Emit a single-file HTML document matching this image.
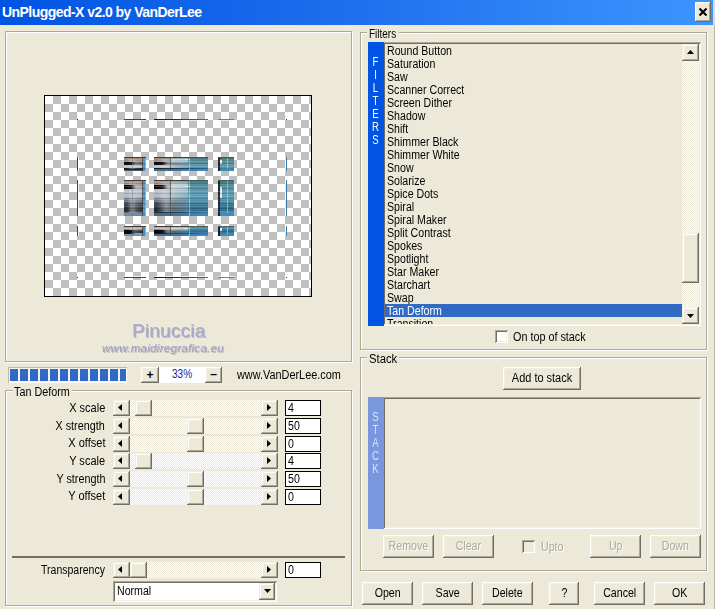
<!DOCTYPE html>
<html>
<head>
<meta charset="utf-8">
<title>UnPlugged-X v2.0 by VanDerLee</title>
<style>
html,body{margin:0;padding:0;}
body{width:715px;height:609px;overflow:hidden;background:#ECE9D8;position:relative;
  font-family:"Liberation Sans",sans-serif;font-size:12px;color:#000;line-height:13px;}
*{box-sizing:border-box;}
#win{position:absolute;left:0;top:0;width:715px;height:609px;opacity:0.999;}
.abs{position:absolute;}
#title{left:0;top:0;width:713px;height:25px;background:linear-gradient(to right,#0054E3 0%,#1C6CEC 45%,#3D95FF 100%);}
#title span{position:absolute;left:2px;top:4px;color:#fff;font-weight:bold;font-size:14px;line-height:16px;white-space:nowrap;letter-spacing:-0.55px;}
.btn{position:absolute;background:#ECE9D8;
  box-shadow:inset -1px -1px 0 #716F64,inset 1px 1px 0 #fff,inset -2px -2px 0 #ACA899,inset 2px 2px 0 #F1EFE2;
  text-align:center;white-space:nowrap;}
.btn.t{height:23px;line-height:23px;}
.btn.sb{box-shadow:inset -1px -1px 0 #716F64,inset 1px 1px 0 #F1EFE2,inset -2px -2px 0 #ACA899,inset 2px 2px 0 #fff;}
.dis{color:#ACA899;text-shadow:1px 1px 0 #fff;}
.sunken{position:absolute;box-shadow:inset 1px 1px 0 #ACA899,inset -1px -1px 0 #fff,inset 2px 2px 0 #716F64,inset -2px -2px 0 #F1EFE2;}
.gd{position:absolute;border:1px solid #ACA899;}
.gw{position:absolute;border:1px solid #fff;}
.glab{position:absolute;background:#ECE9D8;white-space:nowrap;height:13px;}
.track{position:absolute;height:16px;background:#F6F4EC;
  background-image:conic-gradient(#fff 25%,#ECE9D8 0 50%,#fff 0 75%,#ECE9D8 0);background-size:2px 2px;}
.tx{display:inline-block;white-space:nowrap;transform:scaleX(0.885);transform-origin:0 50%;}
.txc{display:inline-block;white-space:nowrap;transform:scaleX(0.885);transform-origin:50% 50%;}
.txr{display:inline-block;white-space:nowrap;transform:scaleX(0.885);transform-origin:100% 50%;}
.lab{position:absolute;white-space:nowrap;text-align:right;width:100px;left:5px;}
.tb{position:absolute;left:285px;width:36px;height:16px;border:1px solid #000;background:#fff;padding-left:2px;line-height:14px;}
.al,.ar{position:absolute;width:4px;height:7px;background:#000;}
.al{clip-path:polygon(100% 0,100% 100%,0 50%);}
.ar{clip-path:polygon(0 0,100% 50%,0 100%);}
.au,.ad{position:absolute;width:7px;height:4px;background:#000;}
.au{clip-path:polygon(0 100%,50% 0,100% 100%);}
.ad{clip-path:polygon(0 0,100% 0,50% 100%);}
.strip{position:absolute;width:16px;z-index:2;color:#fff;text-align:center;line-height:13px;}
.strip span{position:absolute;left:0;width:15px;transform:scaleX(.8);}
#list div{position:absolute;left:2px;width:297px;height:13px;line-height:15px;padding-left:2px;white-space:nowrap;}
</style>
</head>
<body>
<div id="win">
<!-- title bar -->
<div id="title" class="abs"><span>UnPlugged-X v2.0 by VanDerLee</span></div>
<div class="abs" style="left:713px;top:0;width:2px;height:25px;background:#D6DFF0"></div>
<div class="abs" style="left:714px;top:25px;width:1px;height:584px;background:#B9B6A7"></div>
<div class="btn" style="left:695px;top:2px;width:16px;height:20px;"><svg class="abs" style="left:4px;top:6px" width="8" height="8" viewBox="0 0 8 8"><path d="M0.5 0.5 L7.5 7.5 M7.5 0.5 L0.5 7.5" stroke="#000" stroke-width="2" fill="none"/></svg></div>
<!-- left preview frame -->
<div class="gw" style="left:6px;top:32px;width:347px;height:331px"></div>
<div class="gd" style="left:5px;top:31px;width:347px;height:331px"></div>
<!-- preview -->
<svg class="abs" style="left:44px;top:95px" width="268" height="202" viewBox="0 0 268 202" shape-rendering="crispEdges">
<defs>
<pattern id="ck" width="16" height="16" patternUnits="userSpaceOnUse" patternTransform="translate(1,1)"><rect width="16" height="16" fill="#fff"/><rect x="8" width="8" height="8" fill="#C0C0C0"/><rect y="8" width="8" height="8" fill="#C0C0C0"/></pattern>
<linearGradient id="gv2" x1="0" y1="0" x2="0" y2="1">
<stop offset="0" stop-color="#4a3c34"/><stop offset="0.03" stop-color="#4a3c34"/><stop offset="0.04" stop-color="#b09a84"/><stop offset="0.09" stop-color="#a89888"/>
<stop offset="0.12" stop-color="#94949a"/><stop offset="0.2" stop-color="#a8a8ae"/><stop offset="0.3" stop-color="#c0c2c8"/>
<stop offset="0.46" stop-color="#b0b6be"/><stop offset="0.56" stop-color="#70788a"/><stop offset="0.66" stop-color="#3c4652"/><stop offset="0.8" stop-color="#222a32"/><stop offset="0.89" stop-color="#0e1216"/>
<stop offset="0.91" stop-color="#7890a8"/><stop offset="1" stop-color="#6888a8"/></linearGradient>
<linearGradient id="gv1" x1="0" y1="0" x2="0" y2="1">
<stop offset="0" stop-color="#4a3c34"/><stop offset="0.08" stop-color="#4a3c34"/><stop offset="0.1" stop-color="#a08c7a"/><stop offset="0.22" stop-color="#988878"/>
<stop offset="0.3" stop-color="#8c8c90"/><stop offset="0.42" stop-color="#585860"/><stop offset="0.56" stop-color="#686870"/><stop offset="0.62" stop-color="#c8c8cc"/>
<stop offset="0.78" stop-color="#b4b8bc"/><stop offset="0.82" stop-color="#181c22"/><stop offset="0.93" stop-color="#202830"/><stop offset="1" stop-color="#6888a8"/></linearGradient>
<linearGradient id="gv3" x1="0" y1="0" x2="0" y2="1">
<stop offset="0" stop-color="#4a3a34"/><stop offset="0.12" stop-color="#4a3a34"/><stop offset="0.15" stop-color="#b8b0a8"/><stop offset="0.3" stop-color="#c4c4c8"/>
<stop offset="0.4" stop-color="#50545c"/><stop offset="0.55" stop-color="#202428"/><stop offset="0.7" stop-color="#181c22"/><stop offset="0.75" stop-color="#8098b0"/><stop offset="1" stop-color="#7090b0"/></linearGradient>
<linearGradient id="bk" x1="0" y1="0" x2="1" y2="0"><stop offset="0" stop-color="#08080c" stop-opacity="1"/><stop offset="0.6" stop-color="#08080c" stop-opacity="0.9"/><stop offset="1" stop-color="#08080c" stop-opacity="0"/></linearGradient>
<linearGradient id="hl" x1="0" y1="0" x2="1" y2="0"><stop offset="0" stop-color="#dcdce0" stop-opacity="0"/><stop offset="0.3" stop-color="#dcdce0" stop-opacity="0.5"/><stop offset="0.6" stop-color="#dcdce0" stop-opacity="0.2"/><stop offset="1" stop-color="#dcdce0" stop-opacity="0"/></linearGradient>
<linearGradient id="th" x1="0" y1="0" x2="1" y2="0"><stop offset="0.18" stop-color="#6a9cb0" stop-opacity="0"/><stop offset="0.45" stop-color="#6a9cb0" stop-opacity="0.5"/><stop offset="0.66" stop-color="#5a9cb4" stop-opacity="0.8"/><stop offset="1" stop-color="#559ab2" stop-opacity="0.9"/></linearGradient>
<linearGradient id="tv2" x1="0" y1="0" x2="0" y2="1"><stop offset="0" stop-color="#3c5a50"/><stop offset="0.06" stop-color="#4a828c"/><stop offset="0.4" stop-color="#5a9eb4"/><stop offset="0.58" stop-color="#4a8ea8"/><stop offset="0.72" stop-color="#326e8c"/><stop offset="0.86" stop-color="#2c6888"/><stop offset="0.91" stop-color="#4a94bc"/><stop offset="1" stop-color="#3a8abc"/></linearGradient>
<linearGradient id="tv1" x1="0" y1="0" x2="0" y2="1"><stop offset="0" stop-color="#3c5048"/><stop offset="0.15" stop-color="#4a7c84"/><stop offset="0.6" stop-color="#5a96a6"/><stop offset="0.82" stop-color="#4a90b0"/><stop offset="1" stop-color="#3a8abc"/></linearGradient>
<linearGradient id="tv3" x1="0" y1="0" x2="0" y2="1"><stop offset="0" stop-color="#3c5048"/><stop offset="0.2" stop-color="#5a9cb4"/><stop offset="0.5" stop-color="#2c6484"/><stop offset="0.7" stop-color="#3a80a8"/><stop offset="1" stop-color="#4a98c8"/></linearGradient>
<linearGradient id="bl" x1="0" y1="0" x2="1" y2="0"><stop offset="0" stop-color="#4a6484"/><stop offset="0.5" stop-color="#3c78a8"/><stop offset="1" stop-color="#3a8cc4"/></linearGradient>
<linearGradient id="bl0" x1="0" y1="0" x2="1" y2="0"><stop offset="0" stop-color="#101820"/><stop offset="0.45" stop-color="#1c3850"/><stop offset="1" stop-color="#2c78b0"/></linearGradient>
<linearGradient id="wv" x1="0" y1="0" x2="0" y2="1"><stop offset="0" stop-color="#e4f0f0" stop-opacity="0"/><stop offset="0.12" stop-color="#e4f0f0" stop-opacity="0.65"/><stop offset="0.4" stop-color="#d0e0e8" stop-opacity="0.35"/><stop offset="0.6" stop-color="#d0e0e8" stop-opacity="0"/></linearGradient>
<pattern id="stk" width="4" height="5" patternUnits="userSpaceOnUse"><rect width="4" height="1" fill="#fff" opacity="0.16"/><rect y="2" width="4" height="1" fill="#000" opacity="0.14"/><rect y="3" width="4" height="1" fill="#fff" opacity="0.07"/></pattern>
</defs>
<rect x="0" y="0" width="268" height="202" fill="#000"/>
<rect x="1" y="1" width="266" height="200" fill="url(#ck)"/>
<g transform="translate(1,1)">
<rect x="79" y="61" width="22" height="14" fill="url(#gv1)"/><rect x="82" y="63" width="17" height="10" fill="url(#hl)"/><rect x="79" y="66" width="12" height="3" fill="url(#bk)"/><rect x="87" y="62" width="1" height="13" fill="#606468" opacity="0.45"/><rect x="97" y="62" width="1" height="13" fill="#283038" opacity="0.7"/><rect x="98" y="62" width="2" height="13" fill="#4496c8"/><rect x="100" y="62" width="1" height="13" fill="#8cb0c4"/><rect x="79" y="63" width="22" height="10" fill="url(#stk)"/>
<rect x="109" y="61" width="54" height="14" fill="url(#gv1)"/><rect x="112" y="63" width="30" height="10" fill="url(#hl)"/><rect x="109" y="66" width="14" height="3" fill="url(#bk)"/><rect x="109" y="62" width="54" height="11" fill="url(#th)"/><rect x="143" y="61" width="20" height="14" fill="url(#tv1)" opacity="0.85"/><rect x="126" y="62" width="17" height="11" fill="url(#wv)"/><rect x="109" y="72" width="54" height="1" fill="url(#bl0)" opacity="0.85"/><rect x="109" y="73" width="54" height="2" fill="url(#bl)"/><rect x="125" y="61" width="1" height="14" fill="#403c3c" opacity="0.65"/><rect x="144" y="62" width="1" height="13" fill="#d8ecec" opacity="0.5"/><rect x="139" y="63" width="6" height="1" fill="#f0ece0" opacity="0.5"/><rect x="109" y="63" width="54" height="10" fill="url(#stk)"/>
<rect x="173" y="61" width="16" height="14" fill="url(#tv1)"/><rect x="173" y="62" width="2" height="13" fill="#202428"/><rect x="175" y="64" width="2" height="4" fill="#e8e8e8"/><rect x="182" y="62" width="1" height="13" fill="#b8d8e0" opacity="0.6"/><rect x="175" y="73" width="14" height="2" fill="#3a8cc4"/><rect x="173" y="63" width="16" height="10" fill="url(#stk)"/>
<rect x="79" y="84" width="22" height="36" fill="url(#gv2)"/><rect x="82" y="86" width="17" height="31" fill="url(#hl)"/><rect x="79" y="89" width="12" height="4" fill="url(#bk)"/><rect x="87" y="85" width="1" height="35" fill="#606468" opacity="0.45"/><rect x="97" y="85" width="1" height="35" fill="#283038" opacity="0.7"/><rect x="98" y="85" width="2" height="35" fill="#4496c8"/><rect x="100" y="85" width="1" height="35" fill="#8cb0c4"/><rect x="79" y="86" width="22" height="31" fill="url(#stk)"/>
<rect x="109" y="84" width="54" height="36" fill="url(#gv2)"/><rect x="112" y="86" width="30" height="31" fill="url(#hl)"/><rect x="109" y="89" width="14" height="4" fill="url(#bk)"/><rect x="109" y="85" width="54" height="32" fill="url(#th)"/><rect x="143" y="84" width="20" height="36" fill="url(#tv2)" opacity="0.85"/><rect x="126" y="85" width="17" height="32" fill="url(#wv)"/><rect x="109" y="116" width="54" height="1" fill="url(#bl0)" opacity="0.85"/><rect x="109" y="117" width="54" height="3" fill="url(#bl)"/><rect x="125" y="84" width="1" height="36" fill="#403c3c" opacity="0.65"/><rect x="144" y="85" width="1" height="35" fill="#d8ecec" opacity="0.5"/><rect x="139" y="90" width="6" height="1" fill="#f0ece0" opacity="0.5"/><rect x="109" y="86" width="54" height="31" fill="url(#stk)"/>
<rect x="173" y="84" width="16" height="36" fill="url(#tv2)"/><rect x="173" y="85" width="2" height="35" fill="#202428"/><rect x="175" y="91" width="2" height="11" fill="#e8e8e8"/><rect x="182" y="85" width="1" height="35" fill="#b8d8e0" opacity="0.6"/><rect x="175" y="117" width="14" height="3" fill="#3a8cc4"/><rect x="173" y="86" width="16" height="31" fill="url(#stk)"/>
<rect x="79" y="130" width="22" height="10" fill="url(#gv3)"/><rect x="82" y="132" width="17" height="6" fill="url(#hl)"/><rect x="79" y="134" width="12" height="4" fill="url(#bk)"/><rect x="87" y="131" width="1" height="9" fill="#606468" opacity="0.45"/><rect x="97" y="131" width="1" height="9" fill="#283038" opacity="0.7"/><rect x="98" y="131" width="2" height="9" fill="#4496c8"/><rect x="100" y="131" width="1" height="9" fill="#8cb0c4"/>
<rect x="109" y="130" width="54" height="10" fill="url(#gv3)"/><rect x="112" y="132" width="30" height="6" fill="url(#hl)"/><rect x="109" y="134" width="14" height="4" fill="url(#bk)"/><rect x="109" y="131" width="54" height="7" fill="url(#th)"/><rect x="143" y="130" width="20" height="10" fill="url(#tv3)" opacity="0.85"/><rect x="126" y="131" width="17" height="7" fill="url(#wv)"/><rect x="109" y="137" width="54" height="1" fill="url(#bl0)" opacity="0.85"/><rect x="109" y="138" width="54" height="2" fill="url(#bl)"/><rect x="125" y="130" width="1" height="10" fill="#403c3c" opacity="0.65"/><rect x="144" y="131" width="1" height="9" fill="#d8ecec" opacity="0.5"/><rect x="139" y="132" width="6" height="1" fill="#f0ece0" opacity="0.5"/>
<rect x="173" y="130" width="16" height="10" fill="url(#tv3)"/><rect x="173" y="131" width="2" height="9" fill="#202428"/><rect x="175" y="132" width="2" height="3" fill="#e8e8e8"/><rect x="182" y="131" width="1" height="9" fill="#b8d8e0" opacity="0.6"/><rect x="175" y="138" width="14" height="2" fill="#3a8cc4"/>
<rect x="32" y="61" width="1" height="14" fill="#404448"/><rect x="33" y="61" width="1" height="14" fill="#fff" opacity="0.8"/><rect x="241" y="61" width="1" height="14" fill="#3a7aa8"/><rect x="240" y="61" width="1" height="14" fill="#fff" opacity="0.7"/>
<rect x="32" y="84" width="1" height="36" fill="#404448"/><rect x="33" y="84" width="1" height="36" fill="#fff" opacity="0.8"/><rect x="241" y="84" width="1" height="36" fill="#3a7aa8"/><rect x="240" y="84" width="1" height="36" fill="#fff" opacity="0.7"/>
<rect x="32" y="130" width="1" height="10" fill="#404448"/><rect x="33" y="130" width="1" height="10" fill="#fff" opacity="0.8"/><rect x="241" y="130" width="1" height="10" fill="#3a7aa8"/><rect x="240" y="130" width="1" height="10" fill="#fff" opacity="0.7"/>
<rect x="79" y="23" width="22" height="1" fill="#404448"/><rect x="79" y="24" width="22" height="1" fill="#fff" opacity="0.7"/><rect x="79" y="181" width="22" height="1" fill="#404448"/><rect x="79" y="180" width="22" height="1" fill="#fff" opacity="0.7"/>
<rect x="109" y="23" width="54" height="1" fill="url(#bl0)"/><rect x="109" y="24" width="54" height="1" fill="#fff" opacity="0.7"/><rect x="109" y="181" width="54" height="1" fill="url(#bl0)"/><rect x="109" y="180" width="54" height="1" fill="#fff" opacity="0.7"/>
<rect x="173" y="23" width="16" height="1" fill="#3a8cc4"/><rect x="173" y="24" width="16" height="1" fill="#fff" opacity="0.7"/><rect x="173" y="181" width="16" height="1" fill="#3a8cc4"/><rect x="173" y="180" width="16" height="1" fill="#fff" opacity="0.7"/>
<rect x="32" y="23" width="1" height="1" fill="#303438"/><rect x="241" y="23" width="1" height="1" fill="#303438"/><rect x="32" y="181" width="1" height="1" fill="#303438"/><rect x="241" y="181" width="1" height="1" fill="#303438"/>
</g>
</svg>
<div class="abs" style="left:132px;top:320px;font-size:19px;line-height:22px;color:#A9A9D2;text-shadow:1px 1px 0 rgba(130,130,145,.55);letter-spacing:0.2px;white-space:nowrap">Pinuccia</div>
<div class="abs" style="left:102px;top:341px;font-size:11.5px;line-height:14px;font-style:italic;color:#9C9CC4;text-shadow:1px 1px 0 rgba(140,140,150,.5);letter-spacing:0.3px;white-space:nowrap">www.maidiregrafica.eu</div>
<!-- zoom row -->
<div class="abs" style="left:8px;top:367px;width:119px;height:16px;background:#F6F3E8;box-shadow:inset 1px 1px 0 #BDB9A6,inset -1px -1px 0 #fff;overflow:hidden"><div class="abs" style="left:2px;top:2px;width:116px;height:12px;background:repeating-linear-gradient(to right,#316AC5 0,#316AC5 8px,transparent 8px,transparent 10px)"></div></div>
<div class="btn" style="left:141px;top:367px;width:18px;height:16px;line-height:17px;font-weight:bold">+</div>
<div class="abs" style="left:159px;top:367px;width:46px;height:16px;background:#fff;color:#1B1B9B;text-align:center;line-height:14px"><span class="txc" style="transform:scaleX(.84)">33%</span></div>
<div class="btn" style="left:205px;top:367px;width:17px;height:16px;line-height:14px;font-weight:bold">&#8211;</div>
<div class="abs" style="left:237px;top:367px;line-height:16px"><span class="tx" style="transform:scaleX(.907)">www.VanDerLee.com</span></div>
<!-- Tan Deform group -->
<div class="gw" style="left:6px;top:391px;width:347px;height:216px"></div>
<div class="gd" style="left:5px;top:390px;width:347px;height:216px"></div>
<div class="glab" style="left:13px;top:386px;width:59px;padding-left:1px"><span class="tx" style="transform:scaleX(.9)">Tan Deform</span></div>
<div class="lab" style="top:402px"><span class="txr" style="transform:scaleX(0.92)">X scale</span></div>
<div class="track" style="left:130px;top:400px;width:131px"></div>
<div class="btn sb" style="left:113px;top:400px;width:17px;height:16px"><i class="al" style="left:5px;top:4px"></i></div>
<div class="btn sb" style="left:135px;top:400px;width:17px;height:16px"></div>
<div class="btn sb" style="left:261px;top:400px;width:17px;height:16px"><i class="ar" style="left:6px;top:4px"></i></div>
<div class="tb" style="top:400px"><span class="tx">4</span></div>
<div class="lab" style="top:420px"><span class="txr" style="transform:scaleX(0.9)">X strength</span></div>
<div class="track" style="left:130px;top:418px;width:131px"></div>
<div class="btn sb" style="left:113px;top:418px;width:17px;height:16px"><i class="al" style="left:5px;top:4px"></i></div>
<div class="btn sb" style="left:187px;top:418px;width:17px;height:16px"></div>
<div class="btn sb" style="left:261px;top:418px;width:17px;height:16px"><i class="ar" style="left:6px;top:4px"></i></div>
<div class="tb" style="top:418px"><span class="tx">50</span></div>
<div class="lab" style="top:437px"><span class="txr" style="transform:scaleX(0.92)">X offset</span></div>
<div class="track" style="left:130px;top:436px;width:131px"></div>
<div class="btn sb" style="left:113px;top:436px;width:17px;height:16px"><i class="al" style="left:5px;top:4px"></i></div>
<div class="btn sb" style="left:187px;top:436px;width:17px;height:16px"></div>
<div class="btn sb" style="left:261px;top:436px;width:17px;height:16px"><i class="ar" style="left:6px;top:4px"></i></div>
<div class="tb" style="top:436px"><span class="tx">0</span></div>
<div class="lab" style="top:455px"><span class="txr" style="transform:scaleX(0.92)">Y scale</span></div>
<div class="track" style="left:130px;top:453px;width:131px"></div>
<div class="btn sb" style="left:113px;top:453px;width:17px;height:16px"><i class="al" style="left:5px;top:4px"></i></div>
<div class="btn sb" style="left:135px;top:453px;width:17px;height:16px"></div>
<div class="btn sb" style="left:261px;top:453px;width:17px;height:16px"><i class="ar" style="left:6px;top:4px"></i></div>
<div class="tb" style="top:453px"><span class="tx">4</span></div>
<div class="lab" style="top:473px"><span class="txr" style="transform:scaleX(0.9)">Y strength</span></div>
<div class="track" style="left:130px;top:471px;width:131px"></div>
<div class="btn sb" style="left:113px;top:471px;width:17px;height:16px"><i class="al" style="left:5px;top:4px"></i></div>
<div class="btn sb" style="left:187px;top:471px;width:17px;height:16px"></div>
<div class="btn sb" style="left:261px;top:471px;width:17px;height:16px"><i class="ar" style="left:6px;top:4px"></i></div>
<div class="tb" style="top:471px"><span class="tx">50</span></div>
<div class="lab" style="top:490px"><span class="txr" style="transform:scaleX(0.92)">Y offset</span></div>
<div class="track" style="left:130px;top:489px;width:131px"></div>
<div class="btn sb" style="left:113px;top:489px;width:17px;height:16px"><i class="al" style="left:5px;top:4px"></i></div>
<div class="btn sb" style="left:187px;top:489px;width:17px;height:16px"></div>
<div class="btn sb" style="left:261px;top:489px;width:17px;height:16px"><i class="ar" style="left:6px;top:4px"></i></div>
<div class="tb" style="top:489px"><span class="tx">0</span></div>
<div class="abs" style="left:12px;top:556px;width:333px;height:2px;background:#716F64"></div>
<div class="lab" style="top:564px"><span class="txr" style="transform:scaleX(0.876)">Transparency</span></div>
<div class="track" style="left:130px;top:562px;width:131px"></div>
<div class="btn sb" style="left:113px;top:562px;width:17px;height:16px"><i class="al" style="left:5px;top:4px"></i></div>
<div class="btn sb" style="left:130px;top:562px;width:17px;height:16px"></div>
<div class="btn sb" style="left:261px;top:562px;width:17px;height:16px"><i class="ar" style="left:6px;top:4px"></i></div>
<div class="tb" style="top:562px"><span class="tx">0</span></div>
<div class="sunken" style="left:113px;top:581px;width:164px;height:21px;background:#fff"></div>
<div class="abs" style="left:117px;top:585px"><span class="tx">Normal</span></div>
<div class="btn sb" style="left:259px;top:583px;width:16px;height:17px"><i class="ad" style="left:5px;top:6px"></i></div>
<!-- Filters group -->
<div class="gw" style="left:361px;top:33px;width:347px;height:318px"></div>
<div class="gd" style="left:360px;top:32px;width:347px;height:318px"></div>
<div class="glab" style="left:367px;top:28px;width:32px;padding-left:2px"><span class="tx" style="transform:scaleX(.83)">Filters</span></div>
<div class="strip" style="left:368px;top:42px;height:284px;background:#0054E3"><span style="top:14px">F</span><span style="top:27px">I</span><span style="top:40px">L</span><span style="top:53px">T</span><span style="top:66px">E</span><span style="top:79px">R</span><span style="top:92px">S</span></div>
<div id="list" class="sunken" style="left:383px;top:42px;width:318px;height:284px;overflow:hidden">
<div style="top:2px"><span class="tx">Round Button</span></div>
<div style="top:15px"><span class="tx">Saturation</span></div>
<div style="top:28px"><span class="tx">Saw</span></div>
<div style="top:41px"><span class="tx">Scanner Correct</span></div>
<div style="top:54px"><span class="tx">Screen Dither</span></div>
<div style="top:67px"><span class="tx">Shadow</span></div>
<div style="top:80px"><span class="tx">Shift</span></div>
<div style="top:93px"><span class="tx">Shimmer Black</span></div>
<div style="top:106px"><span class="tx">Shimmer White</span></div>
<div style="top:119px"><span class="tx">Snow</span></div>
<div style="top:132px"><span class="tx">Solarize</span></div>
<div style="top:145px"><span class="tx">Spice Dots</span></div>
<div style="top:158px"><span class="tx">Spiral</span></div>
<div style="top:171px"><span class="tx">Spiral Maker</span></div>
<div style="top:184px"><span class="tx">Split Contrast</span></div>
<div style="top:197px"><span class="tx">Spokes</span></div>
<div style="top:210px"><span class="tx">Spotlight</span></div>
<div style="top:223px"><span class="tx">Star Maker</span></div>
<div style="top:236px"><span class="tx">Starchart</span></div>
<div style="top:249px"><span class="tx">Swap</span></div>
<div style="top:262px;background:#316AC5;color:#fff"><span class="tx">Tan Deform</span></div>
<div style="top:275px"><span class="tx">Transition</span></div>
<div class="track" style="left:299px;top:2px;width:17px;height:280px"></div>
<span class="btn sb" style="left:299px;top:2px;width:17px;height:17px"><i class="au" style="left:5px;top:6px"></i></span>
<span class="btn sb" style="left:299px;top:191px;width:17px;height:50px"></span>
<span class="btn sb" style="left:299px;top:265px;width:17px;height:17px"><i class="ad" style="left:5px;top:7px"></i></span>
<span class="abs" style="left:0;right:0;bottom:0;height:2px;background:#fff;border-top:1px solid #F1EFE2"></span>
</div>
<div class="sunken" style="left:495px;top:330px;width:13px;height:13px;background:#fff"></div>
<div class="abs" style="left:513px;top:331px"><span class="tx" style="transform:scaleX(.9)">On top of stack</span></div>
<!-- Stack group -->
<div class="gw" style="left:361px;top:358px;width:347px;height:214px"></div>
<div class="gd" style="left:360px;top:357px;width:347px;height:214px"></div>
<div class="glab" style="left:367px;top:353px;width:32px;padding-left:2px"><span class="tx" style="transform:scaleX(.94)">Stack</span></div>
<div class="btn t" style="left:503px;top:367px;width:78px"><span class="txc" style="transform:scaleX(.913)">Add to stack</span></div>
<div class="strip" style="left:368px;top:397px;height:132px;background:#7A96DF;color:#D8E4F8"><span style="top:14px">S</span><span style="top:27px">T</span><span style="top:40px">A</span><span style="top:53px">C</span><span style="top:66px">K</span></div>
<div class="sunken" style="left:383px;top:397px;width:318px;height:132px"></div>
<div class="btn t dis" style="left:383px;top:535px;width:51px"><span class="txc">Remove</span></div>
<div class="btn t dis" style="left:443px;top:535px;width:51px"><span class="txc">Clear</span></div>
<div class="btn t dis" style="left:590px;top:535px;width:51px"><span class="txc">Up</span></div>
<div class="btn t dis" style="left:650px;top:535px;width:51px"><span class="txc">Down</span></div>
<div class="sunken" style="left:522px;top:540px;width:13px;height:13px"></div>
<div class="abs dis" style="left:541px;top:541px"><span class="tx">Upto</span></div>
<!-- bottom buttons -->
<div class="btn t" style="left:362px;top:582px;width:51px"><span class="txc">Open</span></div>
<div class="btn t" style="left:422px;top:582px;width:51px"><span class="txc">Save</span></div>
<div class="btn t" style="left:482px;top:582px;width:51px"><span class="txc">Delete</span></div>
<div class="btn t" style="left:549px;top:582px;width:30px"><span class="txc">?</span></div>
<div class="btn t" style="left:594px;top:582px;width:51px"><span class="txc">Cancel</span></div>
<div class="btn t" style="left:654px;top:582px;width:51px"><span class="txc">OK</span></div>
</div>
</body>
</html>
